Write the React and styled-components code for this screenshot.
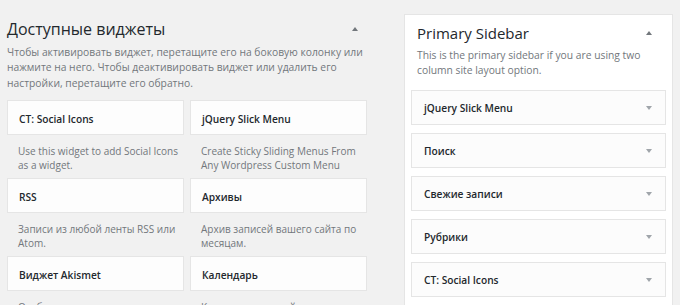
import styled, { createGlobalStyle } from "styled-components";

const Global = createGlobalStyle`
  body {
    margin: 0;
    background: #f1f1f1;
    font-family: "Open Sans", "Noto Sans", sans-serif;
    color: #23282d;
    overflow: hidden;
  }
`;

const Page = styled.div`
  display: grid;
  grid-template-columns: 360px 269px;
  gap: 37px;
  padding-left: 7px;
  height: 305px;
  overflow: hidden;
`;

const Available = styled.section`
  padding-top: 19px;
`;

const HeadRow = styled.div`
  display: flex;
  align-items: center;
  justify-content: space-between;
  padding-right: ${(p) => p.$pr || 0}px;
`;

const Title = styled.h2`
  margin: 0;
  font-size: ${(p) => p.$size}px;
  line-height: 20px;
  font-weight: 400;
  color: #23282d;
`;

const Arrow = styled.span`
  width: 0;
  height: 0;
  border-left: 3px solid transparent;
  border-right: 3px solid transparent;
  ${(p) =>
    p.$down
      ? `border-top: 4px solid #a0a5aa;`
      : `border-bottom: 4px solid #72777c;`}
`;

const Desc = styled.p`
  margin: ${(p) => p.$mt}px 0 0;
  font-size: 10.3px;
  line-height: 15.4px;
  color: #72777c;
`;

const Grid = styled.div`
  display: grid;
  grid-template-columns: 177px 177px;
  column-gap: 6px;
  margin-top: 9px;
`;

const Item = styled.div`
  height: 78px;
`;

const Card = styled.div`
  box-sizing: border-box;
  height: 35px;
  display: flex;
  align-items: center;
  justify-content: space-between;
  padding: 2px 12px 0 11px;
  background: #fdfdfd;
  border: 1px solid #e5e5e5;
  font-size: 10.2px;
  font-weight: 600;
  color: #23282d;
`;

const ItemDesc = styled.div`
  padding: 9px 3px 0 11px;
  font-size: 10px;
  line-height: 14px;
  color: #72777c;
`;

const Sidebar = styled.section`
  margin-top: 14px;
  background: #fff;
  border: 1px solid #e5e5e5;
  border-bottom: none;
  padding: 8px 6px 0 6px;
`;

const SideHead = styled.div`
  padding: 0 6px;
`;

const List = styled.div`
  display: flex;
  flex-direction: column;
  gap: 8px;
  margin-top: 11px;
`;

const SideCard = styled(Card)`
  background: #fcfcfc;
  padding: 2px 13px 0 12px;
`;

const available = [
  ["CT: Social Icons", "Use this widget to add Social Icons as a widget."],
  ["jQuery Slick Menu", "Create Sticky Sliding Menus From Any Wordpress Custom Menu"],
  ["RSS", "Записи из любой ленты RSS или Atom."],
  ["Архивы", "Архив записей вашего сайта по месяцам."],
  ["Виджет Akismet", "Отображает количество спам-комментариев"],
  ["Календарь", "Календарь записей вашего сайта."],
];

const sidebar = [
  "jQuery Slick Menu",
  "Поиск",
  "Свежие записи",
  "Рубрики",
  "CT: Social Icons",
  "Мета",
];

export default function App() {
  return (
    <>
      <Global />
      <Page>
        <Available>
          <HeadRow $pr={9}>
            <Title $size={16}>Доступные виджеты</Title>
            <Arrow />
          </HeadRow>
          <Desc $mt={6}>
            Чтобы активировать виджет, перетащите его на боковую колонку или
            нажмите на него. Чтобы деактивировать виджет или удалить его
            настройки, перетащите его обратно.
          </Desc>
          <Grid>
            {available.map(([name, text]) => (
              <Item key={name}>
                <Card>{name}</Card>
                <ItemDesc>{text}</ItemDesc>
              </Item>
            ))}
          </Grid>
        </Available>
        <Sidebar>
          <SideHead>
            <HeadRow $pr={8}>
              <Title $size={15}>Primary Sidebar</Title>
              <Arrow />
            </HeadRow>
            <Desc $mt={5}>
              This is the primary sidebar if you are using two column site
              layout option.
            </Desc>
          </SideHead>
          <List>
            {sidebar.map((name) => (
              <SideCard key={name}>
                {name}
                <Arrow $down />
              </SideCard>
            ))}
          </List>
        </Sidebar>
      </Page>
    </>
  );
}
